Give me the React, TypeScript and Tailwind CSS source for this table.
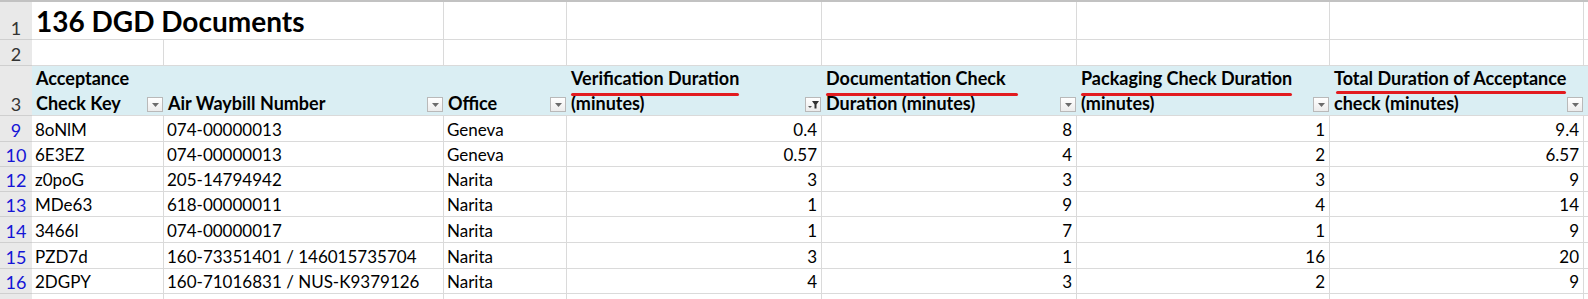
import React from "react";

const FONT = { fontFamily: "Lato, 'Open Sans', sans-serif" };

type Row = { n: number; key: string; awb: string; office: string; v: string; d: string; p: string; t: string; h: string };

const rows: Row[] = [
  { n: 9, key: "8oNlM", awb: "074-00000013", office: "Geneva", v: "0.4", d: "8", p: "1", t: "9.4", h: "h-[26px]" },
  { n: 10, key: "6E3EZ", awb: "074-00000013", office: "Geneva", v: "0.57", d: "4", p: "2", t: "6.57", h: "h-[25px]" },
  { n: 12, key: "z0poG", awb: "205-14794942", office: "Narita", v: "3", d: "3", p: "3", t: "9", h: "h-[25px]" },
  { n: 13, key: "MDe63", awb: "618-00000011", office: "Narita", v: "1", d: "9", p: "4", t: "14", h: "h-[25px]" },
  { n: 14, key: "3466l", awb: "074-00000017", office: "Narita", v: "1", d: "7", p: "1", t: "9", h: "h-[26px]" },
  { n: 15, key: "PZD7d", awb: "160-73351401 / 146015735704", office: "Narita", v: "3", d: "1", p: "16", t: "20", h: "h-[26px]" },
  { n: 16, key: "2DGPY", awb: "160-71016831 / NUS-K9379126", office: "Narita", v: "4", d: "3", p: "2", t: "9", h: "h-[25px]" },
];

function DropBtn() {
  return (
    <div className="absolute right-[1px] bottom-[3px] w-[16px] h-[15px] border border-[#b9b9b9] bg-gradient-to-b from-white to-[#ececec] flex items-center justify-center">
      <svg width="7" height="4" viewBox="0 0 7 4">
        <path d="M0 0 H7 L3.5 4 Z" fill="#6b6b6b" />
      </svg>
    </div>
  );
}

function FilterBtn() {
  return (
    <div className="absolute right-[1px] bottom-[3px] w-[16px] h-[15px] border border-[#b9b9b9] bg-gradient-to-b from-white to-[#ececec]">
      <svg width="14" height="13" viewBox="0 0 14 13" className="absolute left-0 top-0">
        <path d="M2 8 H6 L4 10 Z" fill="#555" />
        <path d="M6 3 H13 L10.5 6.5 V10.5 H8.5 V6.5 Z" fill="#333" />
      </svg>
    </div>
  );
}

function Underlined({ children, cls }: { children: React.ReactNode; cls: string }) {
  return (
    <span className="relative inline-block">
      {children}
      <span className={`absolute h-[3px] rounded-full bg-[#e21b1f] ${cls}`} />
    </span>
  );
}

const cellB = "border-r border-b border-[#dadada]";
const rh = "bg-[#e9e9e9] border-b border-[#cfcfcf] flex items-end justify-center";
const dt = "text-[17px] leading-[22px] flex items-end";

export default function App() {
  return (
    <div className="w-[1588px] h-[299px] overflow-hidden bg-white text-black" style={FONT}>
      <div className="h-[2px] bg-[#c2c2c2]" />
      <div className="grid grid-cols-[32px_132px_280px_123px_255px_255px_253px_254px_4px]">
        {/* Row 1 */}
        <div className={`${rh} h-[38px] text-[18px] text-[#333] leading-[22px]`}>1</div>
        <div className={`col-span-2 ${cellB} h-[38px] flex items-end pl-[4px] pb-[4px]`}>
          <span className="text-[28px] font-bold leading-none whitespace-nowrap">136 DGD Documents</span>
        </div>
        <div className={cellB} />
        <div className={cellB} />
        <div className={cellB} />
        <div className={cellB} />
        <div className={cellB} />
        <div className="border-b border-[#dadada]" />

        {/* Row 2 */}
        <div className={`${rh} h-[26px] text-[18px] text-[#333] leading-[22px]`}>2</div>
        <div className={cellB} />
        <div className={cellB} />
        <div className={cellB} />
        <div className={cellB} />
        <div className={cellB} />
        <div className={cellB} />
        <div className={cellB} />
        <div className="border-b border-[#dadada]" />

        {/* Row 3 header */}
        <div className={`${rh} h-[50px] text-[18px] text-[#333] leading-[22px]`}>3</div>
        {[
          { l1: "Acceptance", l2: "Check Key", ul: null, f: false },
          { l1: "", l2: "Air Waybill Number", ul: null, f: false },
          { l1: "", l2: "Office", ul: null, f: false },
          { l1: "Verification Duration", l2: "(minutes)", ul: "left-0 right-0 top-[27px]", f: true },
          { l1: "Documentation Check", l2: "Duration (minutes)", ul: "left-0 -right-[12px] top-[27px]", f: false },
          { l1: "Packaging Check Duration", l2: "(minutes)", ul: "left-0 right-0 top-[27px]", f: false },
          { l1: "Total Duration of Acceptance", l2: "check (minutes)", ul: "left-[2px] right-0 top-[25px]", f: false },
        ].map((h, i) => (
          <div key={i} className="relative h-[50px] bg-[#daeef3] border-b border-[#dadada] flex flex-col justify-end pl-[4px] font-bold text-[18px] leading-[25px] whitespace-nowrap">
            <div className="h-[25px]">{h.ul ? <Underlined cls={h.ul}>{h.l1}</Underlined> : h.l1}</div>
            <div className="h-[24px]">{h.l2}</div>
            {h.f ? <FilterBtn /> : <DropBtn />}
          </div>
        ))}
        <div className="h-[50px] bg-[#daeef3] border-b border-[#dadada]" />

        {/* Data rows */}
        {rows.map((r) => (
          <React.Fragment key={r.n}>
            <div className={`${rh} ${r.h} text-[18px] text-[#1515d6] leading-[22px]`}>{r.n}</div>
            <div className={`${cellB} ${r.h} pl-[3px] ${dt}`}>{r.key}</div>
            <div className={`${cellB} ${r.h} pl-[3px] ${dt} whitespace-nowrap`}>{r.awb}</div>
            <div className={`${cellB} ${r.h} pl-[3px] ${dt}`}>{r.office}</div>
            <div className={`${cellB} ${r.h} pr-[4px] ${dt} justify-end`}>{r.v}</div>
            <div className={`${cellB} ${r.h} pr-[4px] ${dt} justify-end`}>{r.d}</div>
            <div className={`${cellB} ${r.h} pr-[4px] ${dt} justify-end`}>{r.p}</div>
            <div className={`${cellB} ${r.h} pr-[4px] ${dt} justify-end`}>{r.t}</div>
            <div className={`border-b border-[#dadada] ${r.h}`} />
          </React.Fragment>
        ))}

        {/* Row 17 partial */}
        <div className="bg-[#e9e9e9] h-[25px]" />
        <div className={`${cellB} h-[25px]`} />
        <div className={`${cellB} h-[25px]`} />
        <div className={`${cellB} h-[25px]`} />
        <div className={`${cellB} h-[25px]`} />
        <div className={`${cellB} h-[25px]`} />
        <div className={`${cellB} h-[25px]`} />
        <div className={`${cellB} h-[25px]`} />
        <div className="border-b border-[#dadada] h-[25px]" />
      </div>
    </div>
  );
}
